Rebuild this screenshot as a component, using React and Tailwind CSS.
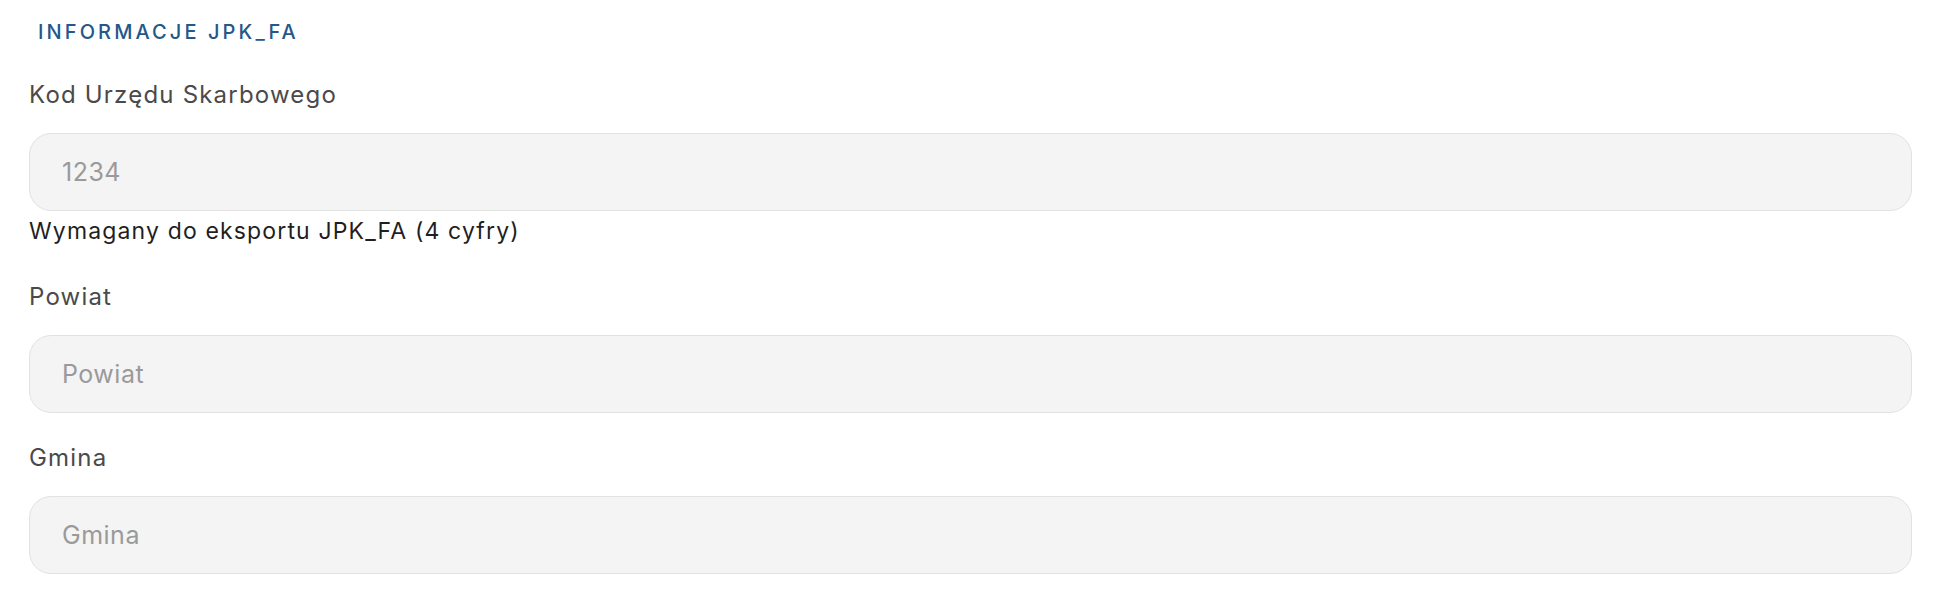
import { useState } from 'react';

const FIELDS = [
  { key: 'kodUs', label: 'Kod Urzędu Skarbowego', placeholder: '1234', help: 'Wymagany do eksportu JPK_FA (4 cyfry)' },
  { key: 'powiat', label: 'Powiat', placeholder: 'Powiat' },
  { key: 'gmina', label: 'Gmina', placeholder: 'Gmina' },
];

function Field({ field, value, onChange }) {
  return (
    <div className="flex flex-col">
      <label htmlFor={field.key} className="text-[24px] leading-[32px] tracking-[0.05em] text-[#4a4a4a] mb-[22px]">
        {field.label}
      </label>
      <input
        id={field.key}
        value={value}
        onChange={(e) => onChange(e.target.value)}
        placeholder={field.placeholder}
        className="h-[78px] w-full rounded-[22px] border border-[#e2e2e2] bg-[#f4f4f4] px-[32px] text-[25px] tracking-[0.02em] text-[#333] placeholder:text-[#9a9a9a] outline-none"
      />
      {field.help && (
        <div className="mt-[2px] mb-[3px] text-[23px] leading-[36px] tracking-[0.05em] text-[#1f1f1f]">{field.help}</div>
      )}
    </div>
  );
}

export default function App() {
  const [values, setValues] = useState({ kodUs: '', powiat: '', gmina: '' });

  return (
    <div className="min-h-screen bg-white pl-[29px] pr-[28px] pt-[18px] font-['Inter',sans-serif]">
      <h3 className="pl-[9px] text-[20px] leading-[28px] tracking-[0.155em] text-[#24578a] font-medium">
        INFORMACJE JPK_FA
      </h3>
      <div className="mt-[33px] flex flex-col gap-[29px]">
        {FIELDS.map((f) => (
          <Field
            key={f.key}
            field={f}
            value={values[f.key]}
            onChange={(v) => setValues((s) => ({ ...s, [f.key]: v }))}
          />
        ))}
      </div>
    </div>
  );
}
